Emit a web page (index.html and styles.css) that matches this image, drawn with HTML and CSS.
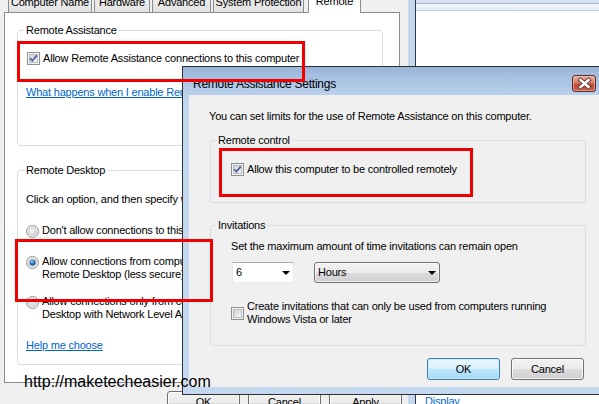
FILE: index.html
```html
<!DOCTYPE html>
<html>
<head>
<meta charset="utf-8">
<title>Remote Assistance Settings</title>
<link rel="stylesheet" href="styles.css">
</head>
<body>
<svg class="defs" width="0" height="0" aria-hidden="true">
  <defs>
    <linearGradient id="boxfill" x1="0" y1="0" x2="1" y2="1"><stop offset="0" stop-color="#cdd1d6"/><stop offset="1" stop-color="#f7f7f7"/></linearGradient>
    <radialGradient id="radfill" cx="0.4" cy="0.35" r="0.75"><stop offset="0" stop-color="#fafafa"/><stop offset="1" stop-color="#cdd0d4"/></radialGradient>
    <radialGradient id="dotfill" cx="0.4" cy="0.35" r="0.7"><stop offset="0" stop-color="#a6d8f8"/><stop offset="0.5" stop-color="#2f7cc2"/><stop offset="1" stop-color="#173f6e"/></radialGradient>
  </defs>
</svg>

<div class="win ex">
  <div class="ex-top"></div>
  <div class="ex-band"></div>
  <div class="ex-body"></div>
  <div class="ex-link">Display</div>
</div>

<div class="win sys">
  <div class="tabs">
    <div class="tab t1">Computer Name</div>
    <div class="tab t2">Hardware</div>
    <div class="tab t3">Advanced</div>
    <div class="tab t4">System Protection</div>
    <div class="tab sel">Remote</div>
  </div>
  <div class="panel">
    <fieldset class="grp g-ra">
      <legend>Remote Assistance</legend>
      <div class="chk">
        <svg class="box" viewBox="0 0 13 13"><rect x="0.5" y="0.5" width="12" height="12" fill="#f4f4f4" stroke="#8e8f8f"/><rect x="2.5" y="2.5" width="8" height="8" fill="url(#boxfill)" stroke="#b9bdc2"/><path d="M3.2 6.3 L5.4 8.8 L9.8 3.4" fill="none" stroke="#4b5f9a" stroke-width="1.7"/></svg>
        <span>Allow Remote Assistance connections to this computer</span>
      </div>
      <a class="link ra-link">What happens when I enable Remote Assistance?</a>
    </fieldset>
    <fieldset class="grp g-rd">
      <legend>Remote Desktop</legend>
      <p class="click">Click an option, and then specify who can connect, if needed.</p>
      <div class="opt o1">
        <svg class="rad" viewBox="0 0 13 13"><circle cx="6.5" cy="6.5" r="6" fill="#f4f4f4" stroke="#8e8f8f"/><circle cx="6.5" cy="6.5" r="4" fill="url(#radfill)" stroke="#c3c6ca" stroke-width="0.8"/></svg>
        <span>Don't allow connections to this computer</span>
      </div>
      <div class="opt o2">
        <svg class="rad" viewBox="0 0 13 13"><circle cx="6.5" cy="6.5" r="6" fill="#f4f4f4" stroke="#8e8f8f"/><circle cx="6.5" cy="6.5" r="4" fill="url(#radfill)" stroke="#c3c6ca" stroke-width="0.8"/><circle cx="6.5" cy="6.5" r="3" fill="url(#dotfill)"/></svg>
        <span>Allow connections from computers running any version of<br>Remote Desktop (less secure)</span>
      </div>
      <div class="opt o3">
        <svg class="rad" viewBox="0 0 13 13"><circle cx="6.5" cy="6.5" r="6" fill="#f4f4f4" stroke="#8e8f8f"/><circle cx="6.5" cy="6.5" r="4" fill="url(#radfill)" stroke="#c3c6ca" stroke-width="0.8"/></svg>
        <span>Allow connections only from computers running Remote<br>Desktop with Network Level Authentication (more secure)</span>
      </div>
      <a class="link help">Help me choose</a>
    </fieldset>
  </div>
  <div class="btnrow">
    <div class="btn">OK</div>
    <div class="btn">Cancel</div>
    <div class="btn">Apply</div>
  </div>
</div>

<div class="dlg">
  <div class="titlebar">
    <div class="title">Remote Assistance Settings</div>
    <div class="close">
      <svg viewBox="0 0 23 17" width="23" height="17"><path d="M7.5 5 L15.5 12 M15.5 5 L7.5 12" stroke="#6a3b35" stroke-width="4.4" stroke-linecap="square" fill="none"/><path d="M7.5 5 L15.5 12 M15.5 5 L7.5 12" stroke="#ffffff" stroke-width="2.4" stroke-linecap="square" fill="none"/></svg>
    </div>
  </div>
  <div class="client">
    <p class="intro">You can set limits for the use of Remote Assistance on this computer.</p>
    <fieldset class="grp g-rc">
      <legend>Remote control</legend>
      <div class="chk">
        <svg class="box" viewBox="0 0 13 13"><rect x="0.5" y="0.5" width="12" height="12" fill="#f4f4f4" stroke="#8e8f8f"/><rect x="2.5" y="2.5" width="8" height="8" fill="url(#boxfill)" stroke="#b9bdc2"/><path d="M3.2 6.3 L5.4 8.8 L9.8 3.4" fill="none" stroke="#4b5f9a" stroke-width="1.7"/></svg>
        <span>Allow this computer to be controlled remotely</span>
      </div>
    </fieldset>
    <fieldset class="grp g-inv">
      <legend>Invitations</legend>
      <p>Set the maximum amount of time invitations can remain open</p>
      <div class="combos">
        <div class="combo c-num"><span>6</span><i class="arrow"></i></div>
        <div class="combo c-unit"><span>Hours</span><i class="arrow"></i></div>
      </div>
      <div class="chk multi">
        <svg class="box" viewBox="0 0 13 13"><rect x="0.5" y="0.5" width="12" height="12" fill="#f4f4f4" stroke="#8e8f8f"/><rect x="2.5" y="2.5" width="8" height="8" fill="url(#boxfill)" stroke="#b9bdc2"/></svg>
        <span>Create invitations that can only be used from computers running<br>Windows Vista or later</span>
      </div>
    </fieldset>
    <div class="dbtns">
      <div class="btn default">OK</div>
      <div class="btn">Cancel</div>
    </div>
  </div>
</div>

<div class="mark m1"></div>
<div class="mark m2"></div>
<div class="mark m3"></div>

<div class="watermark">http://maketecheasier.com</div>
</body>
</html>
```

FILE: styles.css
```css
html, body {
  margin: 0;
  padding: 0;
}
body {
  position: relative;
  width: 599px;
  height: 404px;
  overflow: hidden;
  background: #f0f0f0;
  font-family: "Liberation Sans", Arial, sans-serif;
  font-size: 11px;
  line-height: 13px;
  letter-spacing: -0.2px;
  color: #000;
}
p { margin: 0; }

.defs {
  position: absolute;
  width: 0;
  height: 0;
}

/* ---------- generic ---------- */
.grp {
  margin: 0;
  min-width: 0;
  box-sizing: border-box;
  border: 1px solid #d5dfe5;
  border-radius: 3px;
}
.grp legend {
  padding: 0 2px;
  line-height: 13px;
  white-space: nowrap;
}
.chk, .opt {
  display: flex;
  align-items: flex-start;
  gap: 3px;
  white-space: nowrap;
}
.chk.multi { align-items: center; }
.box, .rad {
  display: block;
  width: 13px;
  height: 13px;
  flex: none;
}
.rad { margin-top: 1px; }
.link {
  display: block;
  width: max-content;
  color: #0066cc;
  text-decoration: underline;
  white-space: nowrap;
}
.btn {
  box-sizing: border-box;
  width: 73px;
  height: 23px;
  border: 1px solid #707070;
  border-radius: 3px;
  background: linear-gradient(#f2f2f2 0%, #ebebeb 50%, #dddddd 51%, #cfcfcf 100%);
  box-shadow: inset 0 0 0 1px rgba(255,255,255,0.75);
  display: flex;
  align-items: center;
  justify-content: center;
}

/* ---------- explorer behind ---------- */
.ex {
  position: absolute;
  left: 416px;
  top: 0;
  width: 183px;
  height: 408px;
  background: #fff;
  display: flex;
  flex-direction: column;
}
.ex-top {
  height: 3px;
  background: #d8e2ee;
  border-bottom: 1px solid #a6b6c9;
}
.ex-band {
  height: 6px;
  background: linear-gradient(#f3f7fc, #e2eaf4);
  border-bottom: 1px solid #c3d0df;
}
.ex-body { flex: 1; }
.ex-link {
  padding-left: 9px;
  color: #0066cc;
}

/* ---------- system properties ---------- */
.sys {
  position: absolute;
  left: 0;
  top: 0;
  width: 408px;
  height: 404px;
  background: #f0f0f0;
  border-right: 7px solid #c5d8ee;
  box-shadow: 1px 0 0 #2e3846;
}
.tabs {
  display: flex;
  align-items: flex-end;
  height: 12px;
  padding-left: 8px;
}
.tab {
  position: relative;
  box-sizing: border-box;
  height: 22px;
  padding-top: 5px;
  border: 1px solid #898c95;
  border-bottom: none;
  border-radius: 2px 2px 0 0;
  background: linear-gradient(#f4f4f4, #e2e2e2);
  text-align: center;
  white-space: nowrap;
}
.t1 { width: 84px; }
.t2 { width: 56px; margin-left: 2px; }
.t3 { width: 59px; margin-left: 2px; }
.t4 { width: 91px; margin-left: 2px; }
.sel {
  width: 53px;
  height: 24px;
  margin-left: 4px;
  margin-bottom: -1px;
  padding-top: 5px;
  background: #fff;
  z-index: 1;
}
.panel {
  box-sizing: border-box;
  margin-left: 4px;
  width: 396px;
  height: 371px;
  border: 1px solid #898c95;
  background: #fff;
}
.g-ra {
  margin: 11px 0 0 12px;
  width: 366px;
  padding: 15px 0 46px 8px;
}
.g-ra legend, .g-rd legend { margin-left: -2px; }
.g-ra .chk .box { margin-left: 1px; }
.ra-link { margin-top: 21px; }
.g-rd {
  margin: 18px 0 0 12px;
  width: 366px;
  padding: 16px 0 12px 8px;
}
.click { white-space: nowrap; }
.o1 { margin-top: 18px; }
.o2 { margin-top: 17px; }
.o3 { margin-top: 14px; }
.help { margin-top: 18px; }
.btnrow {
  display: flex;
  justify-content: flex-end;
  gap: 8px;
  margin-top: 8px;
  padding-right: 6px;
}

/* ---------- dialog ---------- */
.dlg {
  position: absolute;
  left: 182px;
  top: 66px;
  width: 430px;
  height: 329px;
  box-sizing: border-box;
  border: 1px solid #2e2e2e;
  padding: 0 0 7px 6px;
  background: linear-gradient(180deg, #98b4d8 0px, #a8c2e2 12px, #bad1eb 28px, #c4d9f0 40px, #c4d9f0 100%);
  display: flex;
  flex-direction: column;
}
.titlebar {
  height: 28px;
  display: flex;
  align-items: flex-start;
  flex: none;
}
.title {
  margin-left: 4px;
  padding-top: 9px;
  font-size: 12px;
  line-height: 16px;
  letter-spacing: -0.25px;
  white-space: nowrap;
}
.close {
  margin: 8px 15px 0 auto;
  box-sizing: border-box;
  width: 24px;
  height: 17px;
  border: 1px solid #5b2d28;
  border-radius: 3px;
  background: linear-gradient(#eaaa9d 0%, #d98070 45%, #c44b39 55%, #c9604d 100%);
  box-shadow: inset 0 0 0 1px rgba(255,220,210,0.45);
  display: flex;
  align-items: center;
  justify-content: center;
  overflow: hidden;
}
.close svg { display: block; flex: none; }
.client {
  flex: 1;
  background: #f0f0f0;
  padding: 15px 0 0 20px;
}
.intro { white-space: nowrap; }
.g-rc {
  margin: 11px 0 0 1px;
  width: 376px;
  padding: 16px 0 26px 20px;
}
.g-rc legend, .g-inv legend { margin-left: -15px; }
.g-inv {
  margin: 16px 0 0 1px;
  width: 376px;
  padding: 8px 0 19px 20px;
}
.g-inv p { white-space: nowrap; }
.combos {
  display: flex;
  margin-top: 9px;
}
.combo {
  box-sizing: border-box;
  height: 21px;
  display: flex;
  align-items: center;
}
.c-num {
  width: 62px;
  margin-left: 1px;
  padding-left: 3px;
  background: #fff;
  border: 1px solid #e3e9ef;
  border-top-color: #abadb3;
}
.c-unit {
  width: 126px;
  margin-left: 20px;
  padding-left: 3px;
  border: 1px solid #707070;
  border-radius: 3px;
  background: linear-gradient(#f2f2f2 0%, #ebebeb 50%, #dddddd 51%, #cfcfcf 100%);
  box-shadow: inset 0 0 0 1px rgba(255,255,255,0.7);
}
.arrow {
  width: 0;
  height: 0;
  margin-left: auto;
  border-left: 4px solid transparent;
  border-right: 4px solid transparent;
  border-top: 4px solid #000;
}
.c-num .arrow { margin-right: 3px; }
.c-unit .arrow { margin-right: 3px; }
.g-inv .chk { margin-top: 17px; }
.dbtns {
  display: flex;
  justify-content: flex-end;
  gap: 11px;
  width: 376px;
  box-sizing: border-box;
  margin: 12px 0 0 1px;
  padding-right: 2px;
}
.dbtns .btn { height: 22px; }
.btn.default {
  border-color: #3c7fb1;
  background: linear-gradient(#e9f6fd 0%, #d9f0fc 50%, #bee6fd 51%, #a7d9f5 100%);
  box-shadow: inset 0 0 0 1px rgba(200,235,252,0.9);
}

/* ---------- annotations ---------- */
.mark {
  position: absolute;
  box-sizing: border-box;
  border: 3px solid #f20000;
}
.m1 { left: 17px; top: 41px; width: 288px; height: 41px; }
.m2 { left: 15px; top: 239px; width: 198px; height: 63px; }
.m3 { left: 219px; top: 148px; width: 254px; height: 49px; }

.watermark {
  position: absolute;
  left: 24px;
  top: 372px;
  font-size: 16px;
  line-height: 19px;
  letter-spacing: 0;
  color: #000;
  white-space: nowrap;
}
```
